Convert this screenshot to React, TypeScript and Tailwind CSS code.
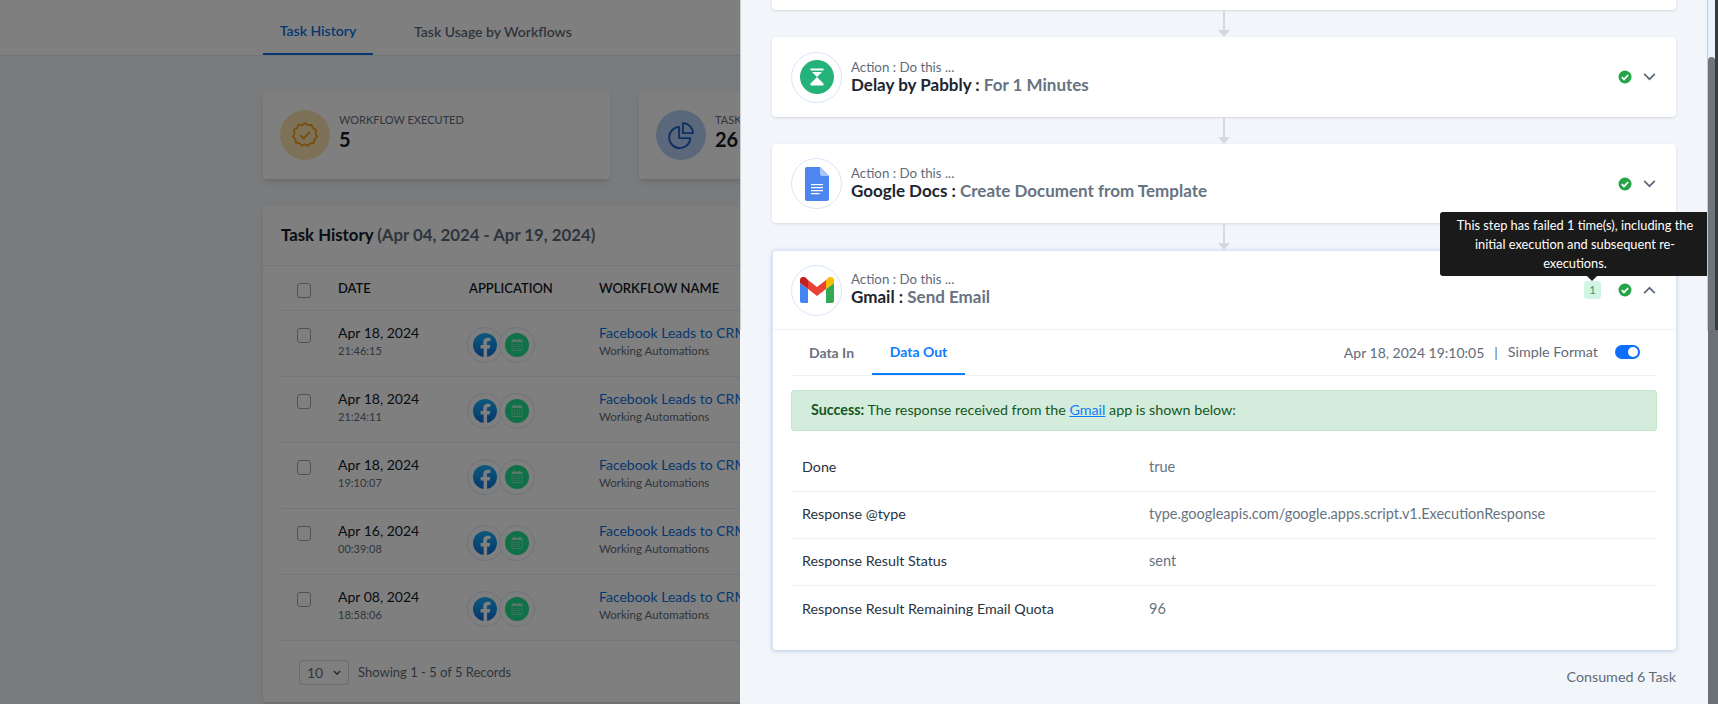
import React from "react";

const font = { fontFamily: 'Lato, "Noto Sans", sans-serif' };

function Fb() {
  return (
    <svg viewBox="0 0 24 24" className="w-6 h-6">
      <defs>
        <linearGradient id="fbg" x1="0" y1="0" x2="0" y2="1">
          <stop offset="0" stopColor="#1ab4ff" />
          <stop offset="1" stopColor="#0b6fd8" />
        </linearGradient>
      </defs>
      <circle cx="12" cy="12" r="12" fill="url(#fbg)" />
      <path d="M16.7 15.5l.5-3.5h-3.3V9.8c0-1 .5-1.9 2-1.9h1.5V5c0 0-1.4-.2-2.7-.2-2.7 0-4.5 1.7-4.5 4.600V12H7.600v3.500h3v8.400c.6.100 1.200.100 1.800.100s1.200 0 1.700-.100v-8.400z" fill="#fff" />
    </svg>
  );
}

function Cal() {
  return (
    <svg viewBox="0 0 24 24" className="w-6 h-6">
      <circle cx="12" cy="12" r="12" fill="#20e08c" />
      <g fill="#fff" fillOpacity="0.55">
        <rect x="7" y="7" width="10" height="2" />
        <rect x="8.700" y="5.500" width="1" height="2" />
        <rect x="14.300" y="5.500" width="1" height="2" />
      </g>
      <rect x="7" y="7" width="10" height="10.500" rx="0.800" fill="none" stroke="#fff" strokeOpacity="0.55" strokeWidth="0.800" />
      <path d="M8.800 11.300h1.300M11.300 11.300h1.300M13.800 11.300h1.300M8.800 13.300h1.300M11.300 13.300h1.300M13.800 13.300h1.300M8.800 15.300h1.300M11.300 15.300h1.300M13.800 15.300h1.300" stroke="#fff" strokeOpacity="0.55" strokeWidth="1" />
    </svg>
  );
}

function Ring({ children, className = "" }: { children: React.ReactNode; className?: string }) {
  return (
    <div className={`w-9 h-9 rounded-full border border-[#dbe4f5] bg-white flex items-center justify-center shrink-0 ${className}`}>
      {children}
    </div>
  );
}

function Check({ className = "" }: { className?: string }) {
  return <span className={`inline-block w-[14px] h-[15px] rounded-[3px] border border-[#9ca3af] bg-white shrink-0 ${className}`} />;
}

const rows = [
  ["Apr 18, 2024", "21:46:15"],
  ["Apr 18, 2024", "21:24:11"],
  ["Apr 18, 2024", "19:10:07"],
  ["Apr 16, 2024", "00:39:08"],
  ["Apr 08, 2024", "18:58:06"],
];

function Background() {
  return (
    <div className="h-[704px] overflow-hidden bg-[#f2f6fa]">
      <div className="h-[56px] bg-white border-b border-[#e4e8ee] pl-[263px] flex">
        <div className="w-[110px] h-[55px] pt-[8px] flex items-center justify-center border-b-2 border-[#0d6fe0] text-[14px] font-semibold text-[#0d6fe0]">
          Task History
        </div>
        <div className="pl-[41px] h-[55px] pt-[8px] flex items-center text-[14px] font-semibold text-[#5f6b7a]">
          Task Usage by Workflows
        </div>
      </div>
      <div className="pl-[263px] pt-[35px] flex gap-[29px] w-[1400px]">
        <div className="w-[347px] h-[88px] bg-white rounded shadow-md flex items-center pl-[17px] gap-[9px] shrink-0">
          <div className="w-[50px] h-[50px] rounded-full bg-[#fbe3b0] flex items-center justify-center">
            <svg viewBox="0 0 24 24" className="w-[30px] h-[30px]" fill="none" stroke="#ef9f1d" strokeWidth="1.500" strokeLinejoin="round" strokeLinecap="round">
              <path d="M12 2.500l2.400 1.700 2.900-.4 1 2.800 2.600 1.300-.6 2.900 1.400 2.500-2.100 2-.3 2.900-2.900.4-2 2.100-2.400-1.300-2.400 1.300-2-2.100-2.900-.4-.3-2.900-2.100-2 1.400-2.500-.6-2.900 2.600-1.300 1-2.800 2.900.4z" />
              <path d="M8.500 12.300l2.500 2.500 4.500-5" />
            </svg>
          </div>
          <div className="pb-[7px]">
            <div className="text-[11px] leading-[15px] text-[#5f6b7a] uppercase">Workflow Executed</div>
            <div className="text-[20px] leading-[24px] font-bold text-[#111827]">5</div>
          </div>
        </div>
        <div className="w-[347px] h-[88px] bg-white rounded shadow-md flex items-center pl-[17px] gap-[9px] shrink-0">
          <div className="w-[50px] h-[50px] rounded-full bg-[#b7cff5] flex items-center justify-center">
            <svg viewBox="0 0 24 24" className="w-[30px] h-[30px]" fill="none" stroke="#1f5fc4" strokeWidth="1.500" strokeLinejoin="round">
              <path d="M10.500 5.500a8.500 8.500 0 1 0 9 9h-9z" />
              <path d="M13.500 2.500a8 8 0 0 1 8 8h-8z" />
            </svg>
          </div>
          <div className="pb-[7px]">
            <div className="text-[11px] leading-[15px] text-[#5f6b7a] uppercase">Tasks Consumed</div>
            <div className="text-[20px] leading-[24px] font-bold text-[#111827]">26</div>
          </div>
        </div>
      </div>
      <div className="ml-[263px] mt-[27px] w-[1150px] h-[496px] bg-white rounded shadow-md">
        <div className="h-[60px] pb-[1px] flex items-center pl-[18px] border-b border-[#e9edf3] text-[16.800px] font-bold text-[#111827]">
          Task History&nbsp;<span className="text-[#5f6b7a]">(Apr 04, 2024 - Apr 19, 2024)</span>
        </div>
        <div className="mx-[18px]">
          <div className="h-[45px] pt-[2px] flex items-center border-b border-[#e9edf3] text-[13px] font-semibold text-[#111827] uppercase">
            <Check className="ml-[16px] mt-[2px]" />
            <div className="ml-[27px] w-[131px]">Date</div>
            <div className="w-[130px]">Application</div>
            <div>Workflow Name</div>
          </div>
          {rows.map(([d, t], i) => (
            <div key={i} className="h-[66px] flex border-b border-[#e9edf3]">
              <Check className="ml-[16px] mt-[17px]" />
              <div className="ml-[27px] w-[129px] pt-[12px]">
                <div className="text-[14px] leading-[20px] text-[#111827]">{d}</div>
                <div className="text-[11px] leading-[16px] text-[#5f6b7a]">{t}</div>
              </div>
              <div className="w-[132px] pt-[16px] flex">
                <Ring><Fb /></Ring>
                <Ring className="-ml-1"><Cal /></Ring>
              </div>
              <div className="pt-[12px]">
                <div className="text-[14px] leading-[20px] text-[#0d6fe0]">Facebook Leads to CRM</div>
                <div className="text-[11.500px] leading-[16px] text-[#5f6b7a]">Working Automations</div>
              </div>
            </div>
          ))}
          <div className="pl-[18px] pt-[19px] flex items-center gap-[9px]">
            <div className="w-[50px] h-[25px] border border-[#d1d5db] rounded-[3px] flex items-center justify-between px-[7px] text-[14px] text-[#5f6b7a]">
              10
              <svg viewBox="0 0 10 6" className="w-[8px] h-[5px]" fill="none" stroke="#4b5563" strokeWidth="1.800"><path d="M1 1l4 4 4-4" /></svg>
            </div>
            <span className="text-[13px] text-[#5f6b7a]">Showing 1 - 5 of 5 Records</span>
          </div>
        </div>
      </div>
    </div>
  );
}

function Connector() {
  return (
    <div className="h-[27px] flex justify-center">
      <svg viewBox="0 0 12 27" className="w-3 h-[27px]">
        <rect x="5" y="0" width="2" height="20" fill="#d5d9de" />
        <path d="M0 20h12L6 27z" fill="#d5d9de" />
      </svg>
    </div>
  );
}

function StatusCheck() {
  return (
    <svg viewBox="0 0 14 14" className="w-[14px] h-[14px]">
      <circle cx="7" cy="7" r="6.500" fill="#22a447" />
      <path d="M3.800 7.200l2.200 2.200 4.200-4.400" fill="none" stroke="#fff" strokeWidth="1.800" />
    </svg>
  );
}

function Chevron({ up = false }: { up?: boolean }) {
  return (
    <svg viewBox="0 0 14 9" className="w-[13px] h-[8px]" fill="none" stroke="#5f6b7a" strokeWidth="2">
      <path d={up ? "M1 8l6-6 6 6" : "M1 1l6 6 6-6"} />
    </svg>
  );
}

function Head({ icon, name, sub, up = false, badge = false }: { icon: React.ReactNode; name: string; sub: string; up?: boolean; badge?: boolean }) {
  return (
    <div className={`h-full flex items-center pr-[20px] ${badge ? "pl-[18px]" : "pl-[19px]"}`}>
      <div className="w-[51px] h-[51px] rounded-full border border-[#d8e4fb] flex items-center justify-center shrink-0">{icon}</div>
      <div className={`ml-[9px] ${badge ? "pb-[2px]" : "pb-[1px]"}`}>
        <div className="text-[13.300px] leading-[16px] text-[#5f6b7a]">Action : Do this ...</div>
        <div className="text-[17px] leading-[20px] font-bold text-[#1c2530]">
          {name} : <span className="text-[#677382]">{sub}</span>
        </div>
      </div>
      <div className="ml-auto flex items-center">
        {badge && (
          <div className="relative mr-[17px]">
            <div className="w-[17px] h-[18px] rounded-[3px] bg-[#d1f5e4] text-[#3f9d6c] text-[12px] flex items-center justify-center">1</div>
          </div>
        )}
        <StatusCheck />
        <div className="ml-[11px]"><Chevron up={up} /></div>
      </div>
    </div>
  );
}

const dataRows = [
  ["Done", "true"],
  ["Response @type", "type.googleapis.com/google.apps.script.v1.ExecutionResponse"],
  ["Response Result Status", "sent"],
  ["Response Result Remaining Email Quota", "96"],
];

function Panel() {
  return (
    <div style={font} className="absolute top-0 right-0 bottom-0 w-[978px] bg-[#f2f6fa] overflow-hidden">
      <div className="absolute top-0 left-0 w-[1px] h-[330px] bg-[#c9cdd2]" />
      <div className="ml-[32px] w-[904px]">
        <div className="h-[10px] bg-white rounded-b shadow-sm" />
        <Connector />
        <div className="h-[80px] bg-white rounded shadow-sm">
          <Head
            name="Delay by Pabbly"
            sub="For 1 Minutes"
            icon={
              <svg viewBox="0 0 34 34" className="w-[34px] h-[34px]">
                <circle cx="17" cy="17" r="17" fill="#23b27a" />
                <path d="M10.500 8.500h13v2h-13zM12 12h10l-5 5zM17 17l6.500 6.500h-13zM10.500 23.500h13v2h-13z" fill="#fff" />
              </svg>
            }
          />
        </div>
        <Connector />
        <div className="h-[79px] bg-white rounded shadow-sm">
          <Head
            name="Google Docs"
            sub="Create Document from Template"
            icon={
              <svg viewBox="0 0 24 34" className="w-[24px] h-[34px]">
                <path d="M2 0h13l9 9v23a2 2 0 0 1-2 2H2a2 2 0 0 1-2-2V2a2 2 0 0 1 2-2z" fill="#4d86ee" />
                <path d="M15 0l9 9h-7a2 2 0 0 1-2-2z" fill="#a9c4f6" />
                <path d="M6 17h12v1.300H6zM6 20h12v1.300H6zM6 23h12v1.300H6zM6 26h8.500v1.300H6z" fill="#fff" />
              </svg>
            }
          />
        </div>
        <Connector />
        <div className="h-[400px] bg-white rounded border-l border-t border-[#d9e4fa] shadow-[0_1px_4px_rgba(100,130,190,0.4)]">
          <div className="h-[79px] border-b border-[#eef2f8]">
            <Head
              name="Gmail"
              sub="Send Email"
              up
              badge
              icon={
                <svg viewBox="0 0 34 26" className="w-[34px] h-[26px]">
                  <path d="M2 26h6V12L0 6v18a2 2 0 0 0 2 2z" fill="#4285f4" />
                  <path d="M26 26h6a2 2 0 0 0 2-2V6l-8 6z" fill="#34a853" />
                  <path d="M26 3v9l8-6V3c0-3-3.400-4-5.500-2.400z" fill="#fbbc04" />
                  <path d="M8 12V3l9 7 9-7v9l-9 7z" fill="#ea4335" />
                  <path d="M0 3v3l8 6V3L5.500.6C3.400-1 0 0 0 3z" fill="#c5221f" />
                </svg>
              }
            />
          </div>
          <div className="pl-[18px] pr-[19px]">
            <div className="h-[46px] flex items-stretch border-b border-[#eef2f8] text-[14px] font-bold">
              <div className="w-[81px] pb-[1px] flex items-center justify-center text-[#677382]">Data In</div>
              <div className="w-[93px] pb-[1px] flex items-center justify-center text-[#0d7cff] border-b-2 border-[#0d7cff]">Data Out</div>
              <div className="ml-auto pb-[1px] flex items-center text-[14px] font-normal text-[#5f6b7a] pr-[17px]">
                Apr 18, 2024 19:10:05
                <span className="mx-[10px] text-[#5f6b7a]">|</span>
                <span className="text-[14.300px]">Simple Format</span>
                <span className="ml-[17px] w-[25px] h-[14px] rounded-full bg-[#0d6efd] flex items-center justify-end pr-[2px]">
                  <span className="w-[10px] h-[10px] rounded-full bg-white" />
                </span>
              </div>
            </div>
            <div className="mt-[14px] h-[41px] pb-[1px] bg-[#d4ecdb] border border-[#c3e6cb] rounded-[3px] flex items-center pl-[19px] text-[14.300px] text-[#155724]">
              <b>Success:</b>&nbsp;The response received from the&nbsp;<span className="text-[#0d7cff] underline">Gmail</span>&nbsp;app is shown below:
            </div>
            <div className="mt-[14px]">
              {dataRows.map(([k, v], i) => (
                <div key={k} className={`h-[47px] pb-[2px] flex items-center ${i < 3 ? "border-b border-[#eef2f8]" : ""}`}>
                  <div className="w-[358px] pl-[11px] text-[14.300px] text-[#28323e] shrink-0">{k}</div>
                  <div className="text-[14.500px] text-[#677382]">{v}</div>
                </div>
              ))}
            </div>
          </div>
        </div>
        <div className="mt-[18px] text-right text-[14.300px] leading-[18px] text-[#5f6b7a]">Consumed 6 Task</div>
      </div>
      <div className="absolute top-[212px] left-[700px] w-[270px] h-[64px] bg-[#1a1a1a] rounded-[3px] px-[10px] text-[12.800px] leading-[19px] pt-[4px] text-white text-center">
        This step has failed 1 time(s), including the initial execution and subsequent re-executions.
        <span className="absolute left-[147px] -bottom-[5px] w-0 h-0 border-x-[5px] border-x-transparent border-t-[5px] border-t-[#1a1a1a]" />
      </div>
      <div className="absolute top-0 right-0 h-[330px] w-[11px] border-l border-[#c4c9cf] bg-[#eaf3fd]">
        <div className="absolute top-0 right-0 w-[3px] h-full bg-[#3a3a3a]" />
        <div className="absolute top-[57px] left-0 w-[7px] bottom-0 bg-[#6e757d] rounded-t-[4px]" />
      </div>
      <div className="absolute top-[330px] right-0 bottom-0 w-[10px] bg-[#6b7076]" />
    </div>
  );
}

export default function App() {
  return (
    <div style={font} className="relative w-[1718px] h-[704px] overflow-hidden">
      <Background />
      <div className="absolute inset-0 bg-black/50" />
      <Panel />
    </div>
  );
}
